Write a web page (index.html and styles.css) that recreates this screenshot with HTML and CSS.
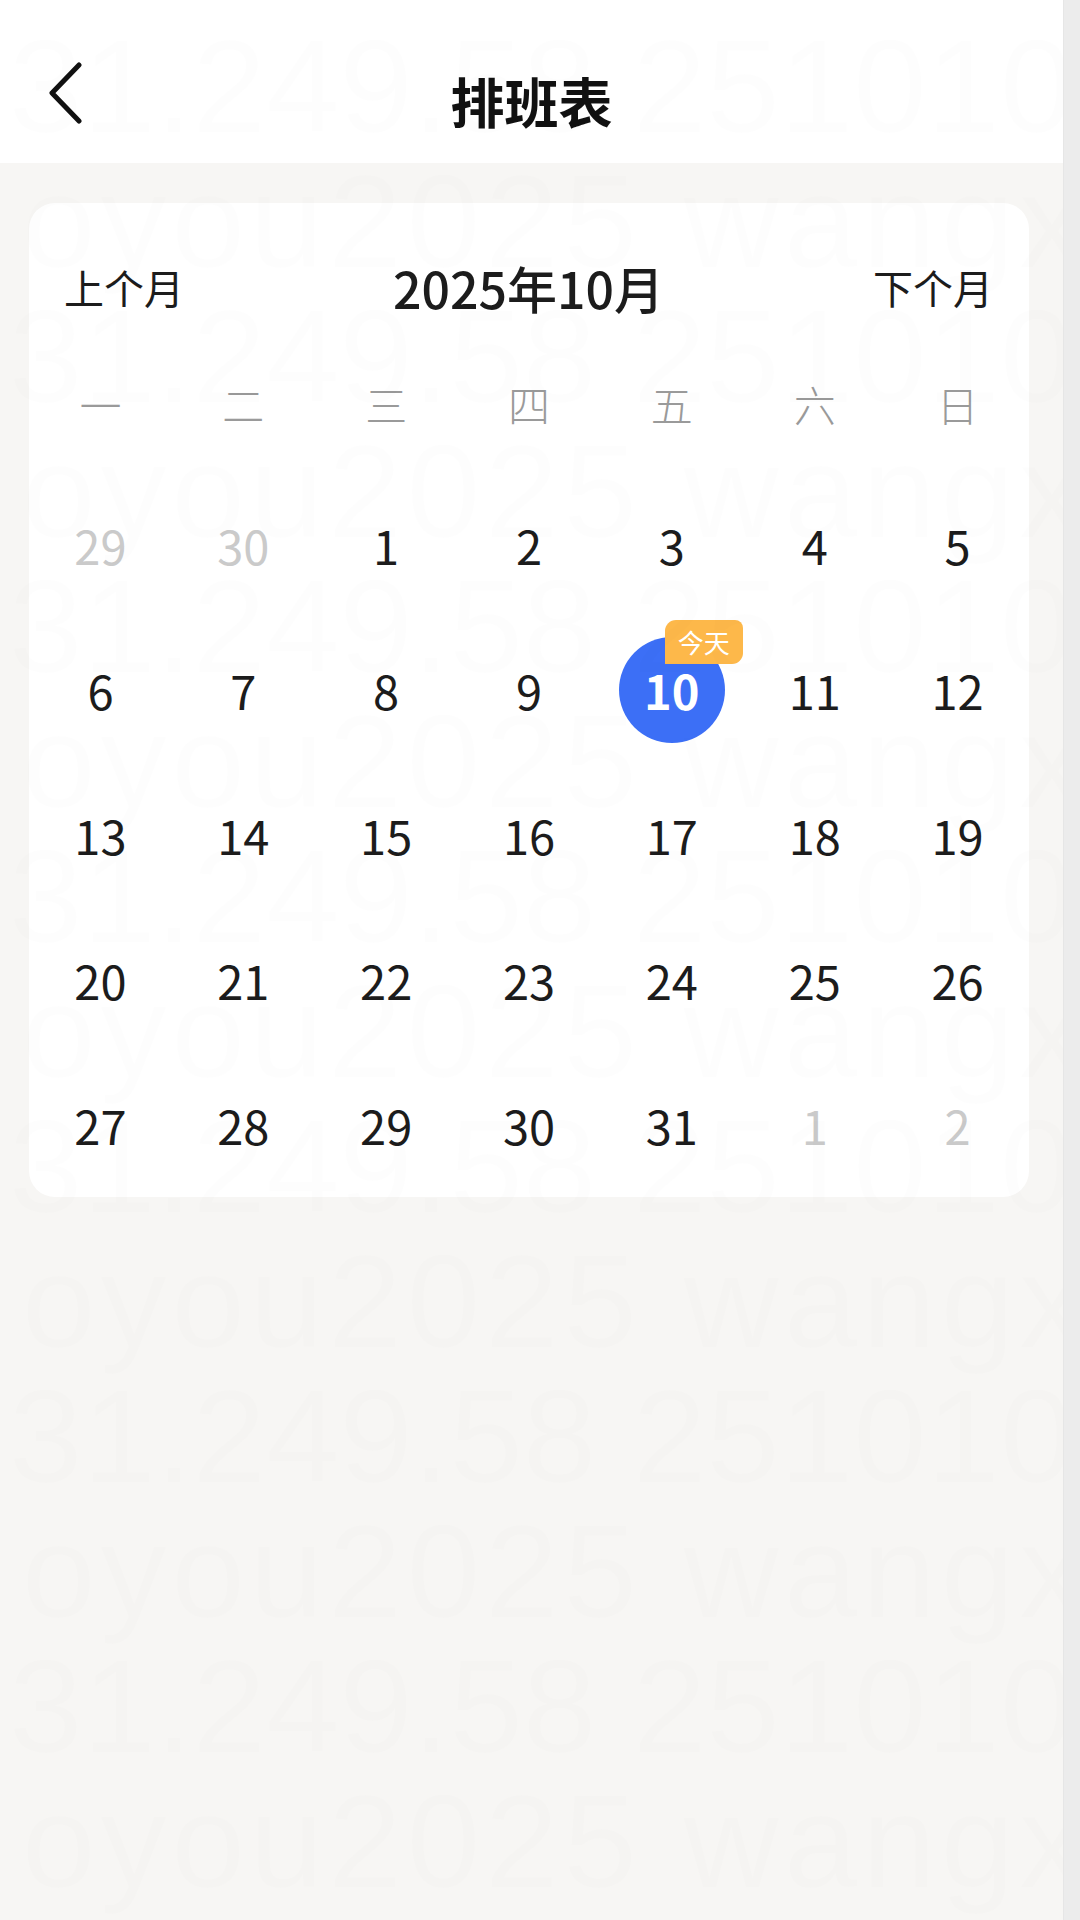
FILE: index.html
```html
<!DOCTYPE html>
<html lang="zh-CN">
<head>
<meta charset="utf-8">
<title>排班表</title>
<link rel="stylesheet" href="styles.css">
</head>
<body>
<div class="app">
  <div class="page">
    <header class="nav">
      <svg class="back" viewBox="0 0 34 62" width="34" height="62" aria-hidden="true">
        <polyline points="31,3 4,31 31,59" fill="none" stroke="#111" stroke-width="5" stroke-linecap="round" stroke-linejoin="round"/>
      </svg>
      <h1 class="title">排班表</h1>
      <span class="nav-spacer"></span>
    </header>
    <main class="content">
      <section class="card">
        <div class="month-bar">
          <span class="switch">上个月</span>
          <span class="month">2025年10月</span>
          <span class="switch">下个月</span>
        </div>
        <div class="weekdays">
          <span>一</span><span>二</span><span>三</span><span>四</span><span>五</span><span>六</span><span>日</span>
        </div>
        <div class="days">
          <div class="day muted">29</div>
          <div class="day muted">30</div>
          <div class="day">1</div>
          <div class="day">2</div>
          <div class="day">3</div>
          <div class="day">4</div>
          <div class="day">5</div>
          <div class="day">6</div>
          <div class="day">7</div>
          <div class="day">8</div>
          <div class="day">9</div>
          <div class="day"><span class="today">10<span class="badge">今天</span></span></div>
          <div class="day">11</div>
          <div class="day">12</div>
          <div class="day">13</div>
          <div class="day">14</div>
          <div class="day">15</div>
          <div class="day">16</div>
          <div class="day">17</div>
          <div class="day">18</div>
          <div class="day">19</div>
          <div class="day">20</div>
          <div class="day">21</div>
          <div class="day">22</div>
          <div class="day">23</div>
          <div class="day">24</div>
          <div class="day">25</div>
          <div class="day">26</div>
          <div class="day">27</div>
          <div class="day">28</div>
          <div class="day">29</div>
          <div class="day">30</div>
          <div class="day">31</div>
          <div class="day muted">1</div>
          <div class="day muted">2</div>
        </div>
      </section>
    </main>
    <div class="watermark" aria-hidden="true">
      <div class="wm-line wm-b">31.249.58 2510101</div>
      <div class="wm-line wm-a">oyou2025 wangxy</div>
      <div class="wm-line wm-b">31.249.58 2510101</div>
      <div class="wm-line wm-a">oyou2025 wangxy</div>
      <div class="wm-line wm-b">31.249.58 2510101</div>
      <div class="wm-line wm-a">oyou2025 wangxy</div>
      <div class="wm-line wm-b">31.249.58 2510101</div>
      <div class="wm-line wm-a">oyou2025 wangxy</div>
      <div class="wm-line wm-b">31.249.58 2510101</div>
      <div class="wm-line wm-a">oyou2025 wangxy</div>
      <div class="wm-line wm-b">31.249.58 2510101</div>
      <div class="wm-line wm-a">oyou2025 wangxy</div>
      <div class="wm-line wm-b">31.249.58 2510101</div>
      <div class="wm-line wm-a">oyou2025 wangxy</div>
    </div>
  </div>
  <div class="scrollbar"></div>
</div>
</body>
</html>
```
FILE: styles.css
```css
* { box-sizing: border-box; }

html, body {
  margin: 0;
  padding: 0;
}

body {
  font-family: "Noto Sans CJK SC", "Noto Sans", sans-serif;
  color: #222;
}

.app {
  display: flex;
  width: 1080px;
  height: 1920px;
  overflow: hidden;
}

.page {
  flex: 1;
  position: relative;
  background: #f7f6f4;
  overflow: hidden;
}

.scrollbar {
  width: 17px;
  background: #ececec;
  border-left: 1px solid #e6e6e6;
}

/* Navigation bar */
.nav {
  height: 163px;
  background: #fff;
  display: grid;
  grid-template-columns: 1fr auto 1fr;
  align-items: center;
  padding: 38px 48px 0 48px;
}

.back {
  display: block;
  margin-bottom: 16px;
}

.title {
  margin: 0;
  font-size: 54px;
  font-weight: 700;
  line-height: 1;
  color: #111;
}

/* Content */
.content {
  padding: 40px 34px 0 29px;
}

.card {
  background: #fff;
  border-radius: 26px;
  padding-top: 54px;
  padding-bottom: 3px;
}

.month-bar {
  display: flex;
  justify-content: space-between;
  align-items: center;
  height: 60px;
  padding: 0 36px 0 35px;
}

.switch {
  font-size: 40px;
  color: #1c1c1c;
  line-height: 1;
}

.month {
  font-size: 50px;
  font-weight: 500;
  color: #1c1c1c;
  line-height: 1;
}

.weekdays {
  display: grid;
  grid-template-columns: repeat(7, 1fr);
  align-items: center;
  height: 60px;
  margin-top: 56px;
  text-align: center;
  font-size: 42px;
  font-weight: 300;
  color: #9a9a9a;
}

.days {
  display: grid;
  grid-template-columns: repeat(7, 1fr);
  grid-template-rows: repeat(5, 145px);
  margin-top: 39px;
  height: 722px;
}

.day {
  display: flex;
  align-items: center;
  justify-content: center;
  font-size: 47px;
  color: #1c1c1c;
}

.day.muted {
  color: #cacaca;
}

.today {
  position: relative;
  width: 106px;
  height: 106px;
  border-radius: 50%;
  background: #3c6ff6;
  color: #fff;
  font-weight: 700;
  display: flex;
  align-items: center;
  justify-content: center;
}

.badge {
  position: absolute;
  left: 46px;
  top: -17px;
  height: 44px;
  padding: 0 13px;
  background: #fdb84a;
  color: #fff;
  font-size: 26px;
  line-height: 44px;
  font-weight: 400;
  white-space: nowrap;
  border-radius: 11px 8px 11px 0;
}

/* Watermark overlay */
.watermark {
  position: absolute;
  inset: 0;
  padding-top: 19px;
  pointer-events: none;
  font-family: "Liberation Sans", Arial, sans-serif;
  font-size: 132px;
  line-height: 135px;
  color: rgba(0, 0, 0, 0.007);
  white-space: nowrap;
}

.wm-a {
  padding-left: 22px;
  letter-spacing: 5px;
}

.wm-b {
  padding-left: 9px;
}
```
